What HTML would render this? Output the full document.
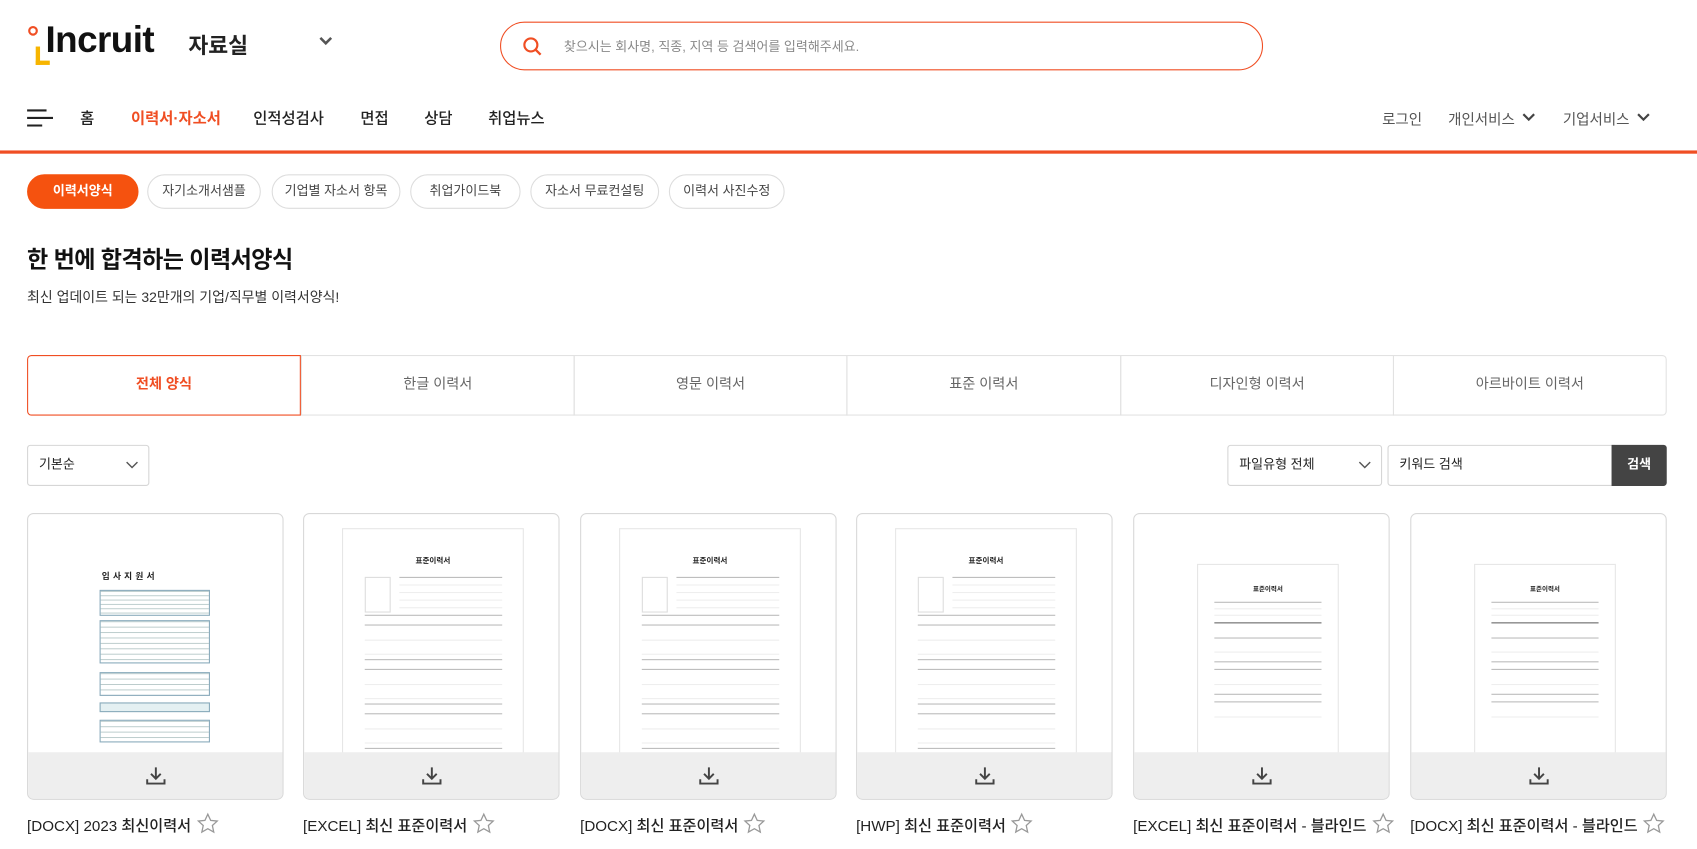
<!DOCTYPE html>
<html><head><meta charset="utf-8">
<style>
*{box-sizing:border-box;margin:0;padding:0}
body{width:1697px;height:848px;overflow:hidden;background:#fff;font-family:"Liberation Sans","Noto Sans CJK KR",sans-serif;color:#222;position:relative}
#w{position:absolute;left:0;top:0;width:1568px;height:784px;transform:scale(1.0823);transform-origin:0 0}
.a{position:absolute}
.pill{position:absolute;top:161px;height:32px;border:1px solid #ddd;border-radius:16px;font-size:12px;line-height:29px;text-align:center;color:#444;background:#fff}
.nav{position:absolute;top:99px;font-size:14.2px;font-weight:500;color:#222}
.tab{position:absolute;top:328px;height:56px;border:1px solid #e2e2e2;font-size:13.1px;line-height:52px;text-align:center;color:#666;width:253px}
.card{position:absolute;top:474px;width:237px;height:265px;border:1px solid #d8d8d8;border-radius:6px;overflow:hidden;background:#fff}
.card .bar{position:absolute;left:0;right:0;bottom:0;height:43px;background:#eeeeee}
.card .bar svg{position:absolute;left:108px;top:12px}
.ttl{position:absolute;top:750px;font-size:14px;font-weight:500;color:#222;white-space:nowrap}
.ttl svg{vertical-align:-4px;margin-left:4px}
.doc{position:absolute;border:1px solid #e6e6e6;background:#fff}
.ln{position:absolute;height:1px;background:#bbb}
.lt{position:absolute;height:1px;background:#eee}
</style></head><body><div id="w">

<div class="a" style="left:26px;top:24px;width:9px;height:9px;border:2.5px solid #f04e23;border-radius:50%"></div>
<div class="a" style="left:33px;top:43px;width:4px;height:17px;background:#f7b500"></div>
<div class="a" style="left:33px;top:56px;width:13px;height:4px;background:#f7b500"></div>
<div class="a" style="left:42px;top:17px;font-size:34px;font-weight:700;color:#111;letter-spacing:-0.5px;line-height:40px">Incruit</div>
<div class="a" style="left:174px;top:26px;font-size:20px;font-weight:700;color:#222">자료실</div>
<svg class="a" style="left:294px;top:33px" width="14" height="10" viewBox="0 0 14 10"><path d="M2 2l5 5 5-5" fill="none" stroke="#555" stroke-width="2.4"/></svg>

<div class="a" style="left:462px;top:20px;width:705px;height:45px;border:1px solid #f04e23;border-radius:23px"></div>
<svg class="a" style="left:482px;top:33px" width="20" height="20" viewBox="0 0 20 20"><circle cx="8.5" cy="8.5" r="6" fill="none" stroke="#f04e23" stroke-width="2"/><path d="M13 13l4.5 4.5" stroke="#f04e23" stroke-width="2.2"/></svg>
<div class="a" style="left:521px;top:34px;font-size:12px;color:#888">찾으시는 회사명, 직종, 지역 등 검색어를 입력해주세요.</div>

<svg class="a" style="left:25px;top:101px" width="24" height="16" viewBox="0 0 24 16"><path d="M0 1h18M0 8h24M0 15h14" stroke="#222" stroke-width="2"/></svg>
<div class="nav" style="left:74px">홈</div>
<div class="nav" style="left:121px;color:#f04e23;font-weight:700">이력서·자소서</div>
<div class="nav" style="left:234px">인적성검사</div>
<div class="nav" style="left:333px">면접</div>
<div class="nav" style="left:392px">상담</div>
<div class="nav" style="left:451px">취업뉴스</div>
<div class="a" style="left:1277px;top:99px;font-size:13.4px;color:#555">로그인</div>
<div class="a" style="left:1338px;top:99px;font-size:13.4px;color:#555">개인서비스</div>
<svg class="a" style="left:1406px;top:104px" width="13" height="9" viewBox="0 0 13 9"><path d="M1.5 1.5l5 5 5-5" fill="none" stroke="#444" stroke-width="2"/></svg>
<div class="a" style="left:1444px;top:99px;font-size:13.4px;color:#555">기업서비스</div>
<svg class="a" style="left:1512px;top:104px" width="13" height="9" viewBox="0 0 13 9"><path d="M1.5 1.5l5 5 5-5" fill="none" stroke="#444" stroke-width="2"/></svg>
<div class="a" style="left:0;top:139px;width:1568px;height:3px;background:#f04e23"></div>

<div class="pill" style="left:25px;width:103px;background:#f5520f;border-color:#f5520f;color:#fff;font-weight:700">이력서양식</div>
<div class="pill" style="left:136px;width:105px">자기소개서샘플</div>
<div class="pill" style="left:251px;width:119px">기업별 자소서 항목</div>
<div class="pill" style="left:379px;width:102px">취업가이드북</div>
<div class="pill" style="left:490px;width:119px">자소서 무료컨설팅</div>
<div class="pill" style="left:618px;width:107px">이력서 사진수정</div>

<div class="a" style="left:25px;top:223px;font-size:21.3px;font-weight:700;color:#111;letter-spacing:-0.5px">한 번에 합격하는 이력서양식</div>
<div class="a" style="left:25px;top:264px;font-size:12.9px;color:#333">최신 업데이트 되는 32만개의 기업/직무별 이력서양식!</div>

<div class="tab" style="left:278px;width:253px">한글 이력서</div>
<div class="tab" style="left:530px;width:253px">영문 이력서</div>
<div class="tab" style="left:782px;width:254px">표준 이력서</div>
<div class="tab" style="left:1035px;width:253px">디자인형 이력서</div>
<div class="tab" style="left:1287px;width:253px;border-radius:0 4px 4px 0">아르바이트 이력서</div>
<div class="tab" style="left:25px;width:253px;border-color:#f04e23;color:#f04e23;font-weight:700;border-radius:4px 0 0 4px">전체 양식</div>

<div class="a" style="left:25px;top:411px;width:113px;height:38px;border:1px solid #d6d6d6;border-radius:3px;font-size:12px;line-height:34px;padding-left:10px">기본순</div>
<svg class="a" style="left:116px;top:426px" width="12" height="8" viewBox="0 0 12 8"><path d="M1 1l5 5 5-5" fill="none" stroke="#555" stroke-width="1.3"/></svg>
<div class="a" style="left:1134px;top:411px;width:143px;height:38px;border:1px solid #d6d6d6;border-radius:3px;font-size:12px;line-height:34px;padding-left:10px">파일유형 전체</div>
<svg class="a" style="left:1255px;top:426px" width="12" height="8" viewBox="0 0 12 8"><path d="M1 1l5 5 5-5" fill="none" stroke="#555" stroke-width="1.3"/></svg>
<div class="a" style="left:1282px;top:411px;width:210px;height:38px;border:1px solid #d6d6d6;border-radius:3px 0 0 3px;font-size:12px;line-height:34px;padding-left:10px">키워드 검색</div>
<div class="a" style="left:1489px;top:411px;width:51px;height:38px;background:#444;color:#fff;font-size:12px;font-weight:700;line-height:36px;text-align:center;border-radius:0 3px 3px 0">검색</div>

<div class="card" style="left:25px">
  <div class="a" style="left:68px;top:52px;font-size:8px;font-weight:700;letter-spacing:3px">입사지원서</div>
  <div class="a" style="left:66px;top:70px;width:102px;height:24px;border:1px solid #8ab;background:linear-gradient(#bcc 1px,transparent 1px) 0 0/100% 4px"></div>
  <div class="a" style="left:66px;top:98px;width:102px;height:40px;border:1px solid #8ab;background:linear-gradient(#bcc 1px,transparent 1px) 0 0/100% 5px"></div>
  <div class="a" style="left:66px;top:146px;width:102px;height:22px;border:1px solid #8ab;background:linear-gradient(#bcc 1px,transparent 1px) 0 0/100% 5px"></div>
  <div class="a" style="left:66px;top:174px;width:102px;height:9px;border:1px solid #8ab;background:#e4f0f2"></div>
  <div class="a" style="left:66px;top:190px;width:102px;height:21px;border:1px solid #8ab;background:linear-gradient(#bcc 1px,transparent 1px) 0 0/100% 5px"></div>
  <div class="bar"><svg width="20" height="20" viewBox="0 0 20 20"><path d="M10 2v10M5.5 8l4.5 4.5L14.5 8M2 13v4h16v-4" fill="none" stroke="#444" stroke-width="1.8"/></svg></div>
</div>

<div class="card" style="left:280px">
  <div class="doc" style="left:35px;top:13px;width:168px;height:230px">
    <div class="a" style="left:0;right:0;top:24px;text-align:center;font-size:7px;font-weight:700">표준이력서</div>
    <div class="a" style="left:20px;top:44px;width:24px;height:33px;border:1px solid #ddd"></div>
    <div class="ln" style="left:52px;right:19px;top:44px"></div><div class="lt" style="left:52px;right:19px;top:51px"></div><div class="lt" style="left:52px;right:19px;top:58px"></div><div class="lt" style="left:52px;right:19px;top:65px"></div><div class="lt" style="left:52px;right:19px;top:72px"></div>
    <div class="ln" style="left:20px;right:19px;top:79px"></div><div class="ln" style="left:20px;right:19px;top:88px"></div><div class="lt" style="left:20px;right:19px;top:102px"></div><div class="lt" style="left:20px;right:19px;top:115px"></div>
    <div class="ln" style="left:20px;right:19px;top:120px"></div><div class="ln" style="left:20px;right:19px;top:129px"></div><div class="lt" style="left:20px;right:19px;top:143px"></div><div class="lt" style="left:20px;right:19px;top:156px"></div>
    <div class="ln" style="left:20px;right:19px;top:161px"></div><div class="ln" style="left:20px;right:19px;top:170px"></div><div class="lt" style="left:20px;right:19px;top:184px"></div><div class="lt" style="left:20px;right:19px;top:197px"></div>
    <div class="ln" style="left:20px;right:19px;top:202px"></div><div class="ln" style="left:20px;right:19px;top:211px"></div>
  </div>
  <div class="bar"><svg width="20" height="20" viewBox="0 0 20 20"><path d="M10 2v10M5.5 8l4.5 4.5L14.5 8M2 13v4h16v-4" fill="none" stroke="#444" stroke-width="1.8"/></svg></div>
</div>
<div class="card" style="left:536px">
  <div class="doc" style="left:35px;top:13px;width:168px;height:230px">
    <div class="a" style="left:0;right:0;top:24px;text-align:center;font-size:7px;font-weight:700">표준이력서</div>
    <div class="a" style="left:20px;top:44px;width:24px;height:33px;border:1px solid #ddd"></div>
    <div class="ln" style="left:52px;right:19px;top:44px"></div><div class="lt" style="left:52px;right:19px;top:51px"></div><div class="lt" style="left:52px;right:19px;top:58px"></div><div class="lt" style="left:52px;right:19px;top:65px"></div><div class="lt" style="left:52px;right:19px;top:72px"></div>
    <div class="ln" style="left:20px;right:19px;top:79px"></div><div class="ln" style="left:20px;right:19px;top:88px"></div><div class="lt" style="left:20px;right:19px;top:102px"></div><div class="lt" style="left:20px;right:19px;top:115px"></div>
    <div class="ln" style="left:20px;right:19px;top:120px"></div><div class="ln" style="left:20px;right:19px;top:129px"></div><div class="lt" style="left:20px;right:19px;top:143px"></div><div class="lt" style="left:20px;right:19px;top:156px"></div>
    <div class="ln" style="left:20px;right:19px;top:161px"></div><div class="ln" style="left:20px;right:19px;top:170px"></div><div class="lt" style="left:20px;right:19px;top:184px"></div><div class="lt" style="left:20px;right:19px;top:197px"></div>
    <div class="ln" style="left:20px;right:19px;top:202px"></div><div class="ln" style="left:20px;right:19px;top:211px"></div>
  </div>
  <div class="bar"><svg width="20" height="20" viewBox="0 0 20 20"><path d="M10 2v10M5.5 8l4.5 4.5L14.5 8M2 13v4h16v-4" fill="none" stroke="#444" stroke-width="1.8"/></svg></div>
</div>
<div class="card" style="left:791px">
  <div class="doc" style="left:35px;top:13px;width:168px;height:230px">
    <div class="a" style="left:0;right:0;top:24px;text-align:center;font-size:7px;font-weight:700">표준이력서</div>
    <div class="a" style="left:20px;top:44px;width:24px;height:33px;border:1px solid #ddd"></div>
    <div class="ln" style="left:52px;right:19px;top:44px"></div><div class="lt" style="left:52px;right:19px;top:51px"></div><div class="lt" style="left:52px;right:19px;top:58px"></div><div class="lt" style="left:52px;right:19px;top:65px"></div><div class="lt" style="left:52px;right:19px;top:72px"></div>
    <div class="ln" style="left:20px;right:19px;top:79px"></div><div class="ln" style="left:20px;right:19px;top:88px"></div><div class="lt" style="left:20px;right:19px;top:102px"></div><div class="lt" style="left:20px;right:19px;top:115px"></div>
    <div class="ln" style="left:20px;right:19px;top:120px"></div><div class="ln" style="left:20px;right:19px;top:129px"></div><div class="lt" style="left:20px;right:19px;top:143px"></div><div class="lt" style="left:20px;right:19px;top:156px"></div>
    <div class="ln" style="left:20px;right:19px;top:161px"></div><div class="ln" style="left:20px;right:19px;top:170px"></div><div class="lt" style="left:20px;right:19px;top:184px"></div><div class="lt" style="left:20px;right:19px;top:197px"></div>
    <div class="ln" style="left:20px;right:19px;top:202px"></div><div class="ln" style="left:20px;right:19px;top:211px"></div>
  </div>
  <div class="bar"><svg width="20" height="20" viewBox="0 0 20 20"><path d="M10 2v10M5.5 8l4.5 4.5L14.5 8M2 13v4h16v-4" fill="none" stroke="#444" stroke-width="1.8"/></svg></div>
</div>
<div class="card" style="left:1047px">
  <div class="doc" style="left:58px;top:46px;width:131px;height:176px">
    <div class="a" style="left:0;right:0;top:17px;text-align:center;font-size:6px;font-weight:700">표준이력서</div>
    <div class="ln" style="left:15px;right:15px;top:34px"></div><div class="lt" style="left:15px;right:15px;top:40px"></div><div class="lt" style="left:15px;right:15px;top:46px"></div><div class="ln" style="left:15px;right:15px;top:53px;background:#666"></div>
    <div class="ln" style="left:15px;right:15px;top:67px"></div><div class="lt" style="left:15px;right:15px;top:80px"></div>
    <div class="ln" style="left:15px;right:15px;top:89px"></div><div class="ln" style="left:15px;right:15px;top:96px"></div><div class="lt" style="left:15px;right:15px;top:110px"></div>
    <div class="ln" style="left:15px;right:15px;top:119px"></div><div class="ln" style="left:15px;right:15px;top:126px"></div><div class="lt" style="left:15px;right:15px;top:140px"></div>
  </div>
  <div class="bar"><svg width="20" height="20" viewBox="0 0 20 20"><path d="M10 2v10M5.5 8l4.5 4.5L14.5 8M2 13v4h16v-4" fill="none" stroke="#444" stroke-width="1.8"/></svg></div>
</div>
<div class="card" style="left:1303px">
  <div class="doc" style="left:58px;top:46px;width:131px;height:176px">
    <div class="a" style="left:0;right:0;top:17px;text-align:center;font-size:6px;font-weight:700">표준이력서</div>
    <div class="ln" style="left:15px;right:15px;top:34px"></div><div class="lt" style="left:15px;right:15px;top:40px"></div><div class="lt" style="left:15px;right:15px;top:46px"></div><div class="ln" style="left:15px;right:15px;top:53px;background:#666"></div>
    <div class="ln" style="left:15px;right:15px;top:67px"></div><div class="lt" style="left:15px;right:15px;top:80px"></div>
    <div class="ln" style="left:15px;right:15px;top:89px"></div><div class="ln" style="left:15px;right:15px;top:96px"></div><div class="lt" style="left:15px;right:15px;top:110px"></div>
    <div class="ln" style="left:15px;right:15px;top:119px"></div><div class="ln" style="left:15px;right:15px;top:126px"></div><div class="lt" style="left:15px;right:15px;top:140px"></div>
  </div>
  <div class="bar"><svg width="20" height="20" viewBox="0 0 20 20"><path d="M10 2v10M5.5 8l4.5 4.5L14.5 8M2 13v4h16v-4" fill="none" stroke="#444" stroke-width="1.8"/></svg></div>
</div>

<div class="ttl" style="left:25px">[DOCX] 2023 최신이력서<svg width="22" height="22" viewBox="0 0 24 24"><path d="M12 2.5l2.9 6.2 6.6.7-4.9 4.5 1.4 6.6L12 17.1l-6 3.4 1.4-6.6-4.9-4.5 6.6-.7z" fill="none" stroke="#999" stroke-width="1.3"/></svg></div>
<div class="ttl" style="left:280px">[EXCEL] 최신 표준이력서<svg width="22" height="22" viewBox="0 0 24 24"><path d="M12 2.5l2.9 6.2 6.6.7-4.9 4.5 1.4 6.6L12 17.1l-6 3.4 1.4-6.6-4.9-4.5 6.6-.7z" fill="none" stroke="#999" stroke-width="1.3"/></svg></div>
<div class="ttl" style="left:536px">[DOCX] 최신 표준이력서<svg width="22" height="22" viewBox="0 0 24 24"><path d="M12 2.5l2.9 6.2 6.6.7-4.9 4.5 1.4 6.6L12 17.1l-6 3.4 1.4-6.6-4.9-4.5 6.6-.7z" fill="none" stroke="#999" stroke-width="1.3"/></svg></div>
<div class="ttl" style="left:791px">[HWP] 최신 표준이력서<svg width="22" height="22" viewBox="0 0 24 24"><path d="M12 2.5l2.9 6.2 6.6.7-4.9 4.5 1.4 6.6L12 17.1l-6 3.4 1.4-6.6-4.9-4.5 6.6-.7z" fill="none" stroke="#999" stroke-width="1.3"/></svg></div>
<div class="ttl" style="left:1047px">[EXCEL] 최신 표준이력서 - 블라인드<svg width="22" height="22" viewBox="0 0 24 24"><path d="M12 2.5l2.9 6.2 6.6.7-4.9 4.5 1.4 6.6L12 17.1l-6 3.4 1.4-6.6-4.9-4.5 6.6-.7z" fill="none" stroke="#999" stroke-width="1.3"/></svg></div>
<div class="ttl" style="left:1303px">[DOCX] 최신 표준이력서 - 블라인드<svg width="22" height="22" viewBox="0 0 24 24"><path d="M12 2.5l2.9 6.2 6.6.7-4.9 4.5 1.4 6.6L12 17.1l-6 3.4 1.4-6.6-4.9-4.5 6.6-.7z" fill="none" stroke="#999" stroke-width="1.3"/></svg></div>

</div></body></html>
